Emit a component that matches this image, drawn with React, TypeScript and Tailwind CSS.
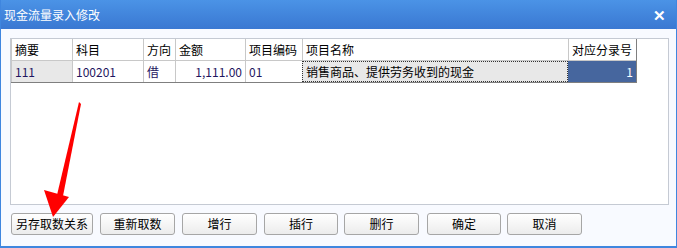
import React from "react";

const cols = [
  { title: "摘要", w: 61 },
  { title: "科目", w: 71 },
  { title: "方向", w: 32 },
  { title: "金额", w: 70 },
  { title: "项目编码", w: 57 },
  { title: "项目名称", w: 266 },
  { title: "对应分录号", w: 68 },
];

// left offset from previous button, width
const buttons = [
  { label: "另存取数关系", ml: 0, w: 82 },
  { label: "重新取数", ml: 7, w: 75 },
  { label: "增行", ml: 7, w: 75 },
  { label: "插行", ml: 7, w: 74 },
  { label: "删行", ml: 6, w: 75 },
  { label: "确定", ml: 8, w: 74 },
  { label: "取消", ml: 6, w: 75 },
];

const font = { fontFamily: '"Noto Sans CJK SC", "Liberation Sans", sans-serif' };

export default function App() {
  return (
    <div
      className="relative w-[677px] h-[248px] flex flex-col border-x border-b-2 border-[#3f86df] bg-[#f8faff] text-[12px] text-black overflow-hidden"
      style={font}
    >
      {/* Title bar */}
      <div className="h-[29px] flex items-center justify-between pl-[3px] pr-[10px] bg-gradient-to-b from-[#4b93e6] to-[#3a78d2] text-white shrink-0">
        <span className="text-[12px] leading-none">现金流量录入修改</span>
        <span className="text-[15px] font-bold leading-none">✕</span>
      </div>

      {/* Grid panel */}
      <div className="ml-[9px] mt-[9px] w-[659px] h-[167px] border border-[#c5cad3] bg-white">
        <div className="flex flex-col w-[626px] border-r border-b border-[#7f7f7f]">
          <div className="flex h-[22px]">
            {cols.map((c) => (
              <div
                key={c.title}
                className="flex items-center px-[3px] border-l border-b border-[#c8c8c8] bg-white whitespace-nowrap"
                style={{ width: c.w }}
              >
                {c.title}
              </div>
            ))}
          </div>
          <div className="flex h-[21px] text-[#1f1660]">
            <div className="w-[61px] flex items-center px-[3px] border-l border-[#c8c8c8] bg-[#e8e8e8]">111</div>
            <div className="w-[71px] flex items-center px-[3px] border-l border-[#c8c8c8]">100201</div>
            <div className="w-[32px] flex items-center px-[3px] border-l border-[#c8c8c8]">借</div>
            <div className="w-[70px] flex items-center justify-end px-[3px] border-l border-[#c8c8c8]">1,111.00</div>
            <div className="w-[57px] flex items-center px-[3px] border-l border-[#c8c8c8]">01</div>
            <div className="w-[266px] flex items-center px-[3px] border border-dotted border-[#333] bg-[#e8e8e8] text-black">
              销售商品、提供劳务收到的现金
            </div>
            <div className="w-[68px] flex items-center justify-end px-[3px] bg-[#46669e] text-white">1</div>
          </div>
        </div>
      </div>

      {/* Buttons */}
      <div className="flex ml-[10px] mt-[8px]">
        {buttons.map((b) => (
          <button
            key={b.label}
            className="h-[22px] rounded-[3px] border border-[#a6a6a6] bg-gradient-to-b from-white to-[#ececec] text-[12px] text-black leading-none"
            style={{ width: b.w, marginLeft: b.ml }}
          >
            {b.label}
          </button>
        ))}
      </div>

      {/* Red annotation arrow */}
      <svg className="absolute left-0 top-0 pointer-events-none" width="677" height="248">
        <polygon points="78,102 80,104 62,196 56,195" fill="#ff0000" />
        <polygon points="43,190 68,197 52,217" fill="#ff0000" />
      </svg>
    </div>
  );
}
